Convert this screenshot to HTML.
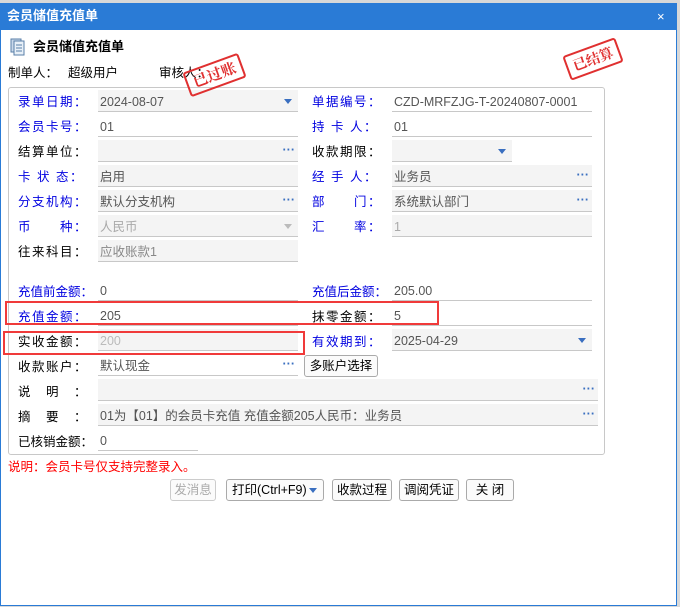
<html><head><style>
body{margin:0;width:680px;height:607px;background:#fff;font-family:"Liberation Sans","Noto Sans CJK SC",sans-serif;font-size:12px;position:relative;overflow:hidden;color:#000}
.a{position:absolute;white-space:nowrap;line-height:14px}
.lb{position:absolute;white-space:nowrap;font-size:12.5px;letter-spacing:1.5px;line-height:14px}
.bl{color:#0000e0}
.in{position:absolute;height:22px;border-bottom:1px solid #c8c8c8;color:#555;font-size:12.5px;line-height:24px;padding-left:2px;box-sizing:border-box}
.g{background:#f4f4f4}
.dd{position:absolute;right:6px;top:9px;width:0;height:0;border-left:4px solid transparent;border-right:4px solid transparent;border-top:5px solid #3a6fc0}
.dots{position:absolute;right:3px;top:3px;color:#3a6fc0;font-weight:bold;letter-spacing:0;line-height:14px}
.btn{position:absolute;height:20px;border:1px solid #aaa;border-radius:3px;background:#fbfbfb;font-size:12.5px;line-height:20px;text-align:center}
.stamp{position:absolute;border:2px solid #e03030;color:#e03030;font-family:"Noto Serif CJK SC",serif;font-size:15px;font-weight:bold;padding:0 5px;border-radius:3px;transform:rotate(-20deg);line-height:22px}
</style></head><body>
<div class="a" style="left:0;top:0;width:680px;height:607px;background:#d8d8d8"></div>
<div class="a" style="left:0;top:3px;width:677px;height:603px;background:#fff;border:1px solid #2a7bd6;border-top:0;box-sizing:border-box"></div>
<div class="a" style="left:0;top:3px;width:677px;height:27px;background:#2a7bd6"></div>
<div class="a" style="left:7px;top:9px;color:#fff;font-size:13px;font-weight:bold">会员储值充值单</div>
<div class="a" style="left:657px;top:10px;color:#fff;font-size:13px">×</div>
<svg class="a" style="left:10px;top:38px" width="16" height="18"><rect x="1" y="1" width="10" height="13" fill="#c9d8ea" stroke="#5a7fa8"/><rect x="4" y="3" width="10" height="14" fill="#e8f0f8" stroke="#5a7fa8"/><path d="M6 7h6M6 10h6M6 13h6" stroke="#5a7fa8"/></svg>
<div class="a" style="left:33px;top:40px;font-size:13px;font-weight:bold">会员储值充值单</div>
<div class="a" style="left:8px;top:66px;font-size:12.5px">制单人：</div>
<div class="a" style="left:68px;top:66px;font-size:12.5px">超级用户</div>
<div class="a" style="left:159px;top:66px;font-size:12.5px">审核人：</div>
<div class="a" style="left:8px;top:87px;width:597px;height:368px;border:1px solid #c8c8c8;border-radius:3px;box-sizing:border-box"></div>

<div class="lb bl" style="left:18px;top:95px">录单日期：</div><div class="in g" style="left:98px;top:90px;width:200px">2024-08-07<span class="dd"></span></div>
<div class="lb bl" style="left:312px;top:95px">单据编号：</div><div class="in" style="left:392px;top:90px;width:200px">CZD-MRFZJG-T-20240807-0001</div>
<div class="lb bl" style="left:18px;top:120px">会员卡号：</div><div class="in" style="left:98px;top:115px;width:200px">01</div>
<div class="lb bl" style="left:312px;top:120px">持 卡 人：</div><div class="in" style="left:392px;top:115px;width:200px">01</div>
<div class="lb" style="left:18px;top:145px">结算单位：</div><div class="in g" style="left:98px;top:140px;width:200px"><span class="dots">···</span></div>
<div class="lb" style="left:312px;top:145px">收款期限：</div><div class="in g" style="left:392px;top:140px;width:120px"><span class="dd"></span></div>
<div class="lb bl" style="left:18px;top:170px">卡 状 态：</div><div class="in g" style="left:98px;top:165px;width:200px">启用</div>
<div class="lb bl" style="left:312px;top:170px">经 手 人：</div><div class="in g" style="left:392px;top:165px;width:200px">业务员<span class="dots">···</span></div>
<div class="lb bl" style="left:18px;top:195px">分支机构：</div><div class="in g" style="left:98px;top:190px;width:200px">默认分支机构<span class="dots">···</span></div>
<div class="lb bl" style="left:312px;top:195px">部　　门：</div><div class="in g" style="left:392px;top:190px;width:200px">系统默认部门<span class="dots">···</span></div>
<div class="lb bl" style="left:18px;top:220px">币　　种：</div><div class="in g" style="left:98px;top:215px;width:200px;color:#aaa">人民币<span class="dd" style="border-top-color:#bbb"></span></div>
<div class="lb bl" style="left:312px;top:220px">汇　　率：</div><div class="in g" style="left:392px;top:215px;width:200px;color:#aaa">1</div>
<div class="lb" style="left:18px;top:245px">往来科目：</div><div class="in g" style="left:98px;top:240px;width:200px;color:#888">应收账款1</div>

<div class="a bl" style="left:18px;top:285px;font-size:12.5px">充值前金额：</div><div class="in" style="left:98px;top:279px;width:200px">0</div>
<div class="a bl" style="left:312px;top:285px;font-size:12.5px">充值后金额：</div><div class="in" style="left:392px;top:279px;width:200px">205.00</div>
<div class="lb bl" style="left:18px;top:310px">充值金额：</div><div class="in" style="left:98px;top:304px;width:200px">205</div>
<div class="lb" style="left:312px;top:310px">抹零金额：</div><div class="in" style="left:392px;top:304px;width:200px">5</div>
<div class="lb" style="left:18px;top:335px">实收金额：</div><div class="in g" style="left:98px;top:329px;width:200px;color:#bbb">200</div>
<div class="lb bl" style="left:312px;top:335px">有效期到：</div><div class="in g" style="left:392px;top:329px;width:200px">2025-04-29<span class="dd"></span></div>
<div class="lb" style="left:18px;top:360px">收款账户：</div><div class="in" style="left:98px;top:354px;width:200px">默认现金<span class="dots">···</span></div>
<div class="btn" style="left:304px;top:355px;width:72px">多账户选择</div>
<div class="lb" style="left:18px;top:385px">说　明　：</div><div class="in g" style="left:98px;top:379px;width:500px"><span class="dots">···</span></div>
<div class="lb" style="left:18px;top:410px">摘　要　：</div><div class="in g" style="left:98px;top:404px;width:500px">01为【01】的会员卡充值 充值金额205人民币：业务员<span class="dots">···</span></div>
<div class="a" style="left:18px;top:435px;font-size:12.5px">已核销金额：</div><div class="in" style="left:98px;top:429px;width:100px">0</div>

<div class="a" style="left:5px;top:301px;width:434px;height:24px;border:2px solid #f03a3a;box-sizing:border-box"></div>
<div class="a" style="left:3px;top:331px;width:302px;height:24px;border:2px solid #f03a3a;box-sizing:border-box"></div>

<div class="a" style="left:8px;top:460px;color:#f00;font-size:12.5px">说明：会员卡号仅支持完整录入。</div>
<div class="btn" style="left:170px;top:479px;width:44px;color:#aaa;border-color:#ccc">发消息</div>
<div class="btn" style="left:226px;top:479px;width:98px;text-align:left;padding-left:5px;box-sizing:border-box;height:22px">打印(Ctrl+F9)<span class="dd" style="top:8px"></span></div>
<div class="btn" style="left:332px;top:479px;width:58px">收款过程</div>
<div class="btn" style="left:399px;top:479px;width:58px">调阅凭证</div>
<div class="btn" style="left:466px;top:479px;width:46px">关 闭</div>

<div class="stamp" style="left:185px;top:62px">已过账</div>
<div class="stamp" style="left:565px;top:46px;font-size:14px">已结算</div>
</body></html>
